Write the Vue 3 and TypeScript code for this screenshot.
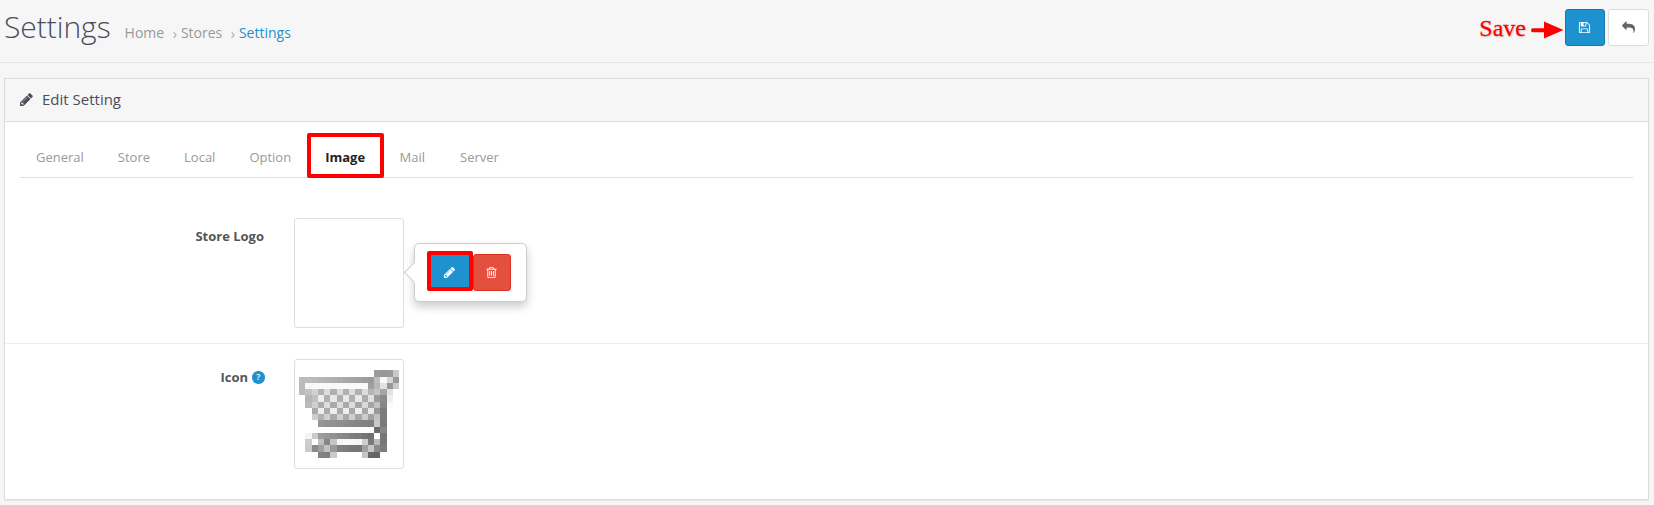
<script setup lang="ts">
interface Cell { x: number; y: number; c: string }

const crumbs: string[] = ['Home', 'Stores', 'Settings']
const tabs: string[] = ['General', 'Store', 'Local', 'Option', 'Image', 'Mail', 'Server']
const activeTab = 'Image'

const icons = {
  pencil: 'M491 1536l91-91-235-235-91 91v107h128v128h107zm523-928q0-22-22-22-10 0-17 7l-542 542q-7 7-7 17 0 22 22 22 10 0 17-7l542-542q7-7 7-17zm-54-192l416 416-832 832h-416v-416zm683 96q0 53-37 90l-166 166-416-416 166-165q36-38 90-38 53 0 91 38l235 234q37 39 37 91z',
  trash: 'M704 736v576q0 14-9 23t-23 9h-64q-14 0-23-9t-9-23v-576q0-14 9-23t23-9h64q14 0 23 9t9 23zm256 0v576q0 14-9 23t-23 9h-64q-14 0-23-9t-9-23v-576q0-14 9-23t23-9h64q14 0 23 9t9 23zm256 0v576q0 14-9 23t-23 9h-64q-14 0-23-9t-9-23v-576q0-14 9-23t23-9h64q14 0 23 9t9 23zm128 724v-948h-896v948q0 22 7 40.5t14.5 27 10.5 8.5h832q3 0 10.5-8.5t14.5-27 7-40.5zm-672-1076h448l-48-117q-7-9-17-11h-317q-10 2-17 11zm928 32v64q0 14-9 23t-23 9h-96v948q0 83-47 143.5t-113 60.5h-832q-66 0-113-58.5t-47-141.5v-952h-96q-14 0-23-9t-9-23v-64q0-14 9-23t23-9h309l70-167q15-37 54-63t79-26h320q40 0 79 26t54 63l70 167h309q14 0 23 9t9 23z',
  floppy: 'M512 1536h768v-384h-768v384zm896 0h128v-896q0-14-10-38.5t-20-34.5l-281-281q-10-10-34-20t-39-10v416q0 40-28 68t-68 28h-576q-40 0-68-28t-28-68v-416h-128v1280h128v-416q0-40 28-68t68-28h832q40 0 68 28t28 68v416zm-384-928v-320q0-13-9.5-22.5t-22.5-9.5h-192q-13 0-22.5 9.5t-9.5 22.5v320q0 13 9.5 22.5t22.5 9.5h192q13 0 22.5-9.5t9.5-22.5zm640 32v928q0 40-28 68t-68 28h-1344q-40 0-68-28t-28-68v-1344q0-40 28-68t68-28h928q40 0 88 20t76 48l280 280q28 28 48 76t20 88z',
  reply: 'M1792 1120q0 166-127 451-3 7-10.5 24t-13.5 30-13 22q-12 17-28 17-15 0-23.5-10t-8.5-25q0-9 2.5-26.5t2.5-23.5q5-68 5-123 0-101-17.5-181t-48.5-138.5-80-101-105.5-69.5-133-42.5-154-21.5-175.500-6h-224v256q0 26-19 45t-45 19-45-19l-512-512q-19-19-19-45t19-45l512-512q19-19 45-19t45 19 19 45v256h224q713 0 875 403 53 134 53 333z',
}

// 16 × 16 grey levels of the cart favicon, two hex digits per cell, ".." is empty
const cart: string[] = [
  '.. .. .. .. .. .. .. .. .. .. .. .. .. .. .. ..',
  '.. .. .. .. .. .. .. .. .. .. .. .. 9b 99 9b c8',
  'bd bb b9 b6 b3 b0 ac a8 a4 a1 9e 9b bd fa d6 9a',
  'bb f8 f9 f9 f9 fa fa fa fa fa fa a0 b8 e2 98 ca',
  'bb c4 d2 b2 dc b0 dc b0 dd b0 dd b4 c4 a5 e2 ..',
  '.. b6 c0 ee b0 e8 ae e8 b0 e8 ac e0 9a 8a ee ..',
  '.. ba d0 ac dd aa dc aa dc a6 d8 a4 c2 86 fa ..',
  '.. .. aa ef ab ee ab ee a9 ee a8 e8 98 7b .. ..',
  '.. .. ce b1 d0 aa cf aa ce a6 cc a2 c0 7b .. ..',
  '.. .. .. 96 92 90 8e 8b 88 85 82 80 c8 7a .. ..',
  '.. .. .. .. .. .. .. .. .. .. .. .. 6c 86 .. ..',
  '.. f4 ca 9c 96 90 8a 86 80 7b 75 70 ff 78 .. ..',
  '.. ce ff c0 86 c6 f6 f8 f8 f6 ce 7a ba 76 .. ..',
  '.. ca 8a a0 c2 9a 80 7c 78 76 a0 c6 8a 7c .. ..',
  '.. .. .. 82 80 ca .. .. .. .. c4 66 64 .. .. ..',
  '.. .. .. .. .. .. .. .. .. .. .. .. .. .. .. ..',
]
const cells: Cell[] = cart.flatMap((row, y) =>
  row.split(' ').map((v, x) => ({ x, y, c: v })).filter((p) => p.c !== '..')
    .map((p) => ({ x: p.x, y: p.y, c: `#${p.c}${p.c}${p.c}` })),
)
</script>

<template>
  <main class="page">
    <header class="top">
      <h1>Settings</h1>
      <nav class="crumbs">
        <template v-for="(c, i) in crumbs" :key="c">
          <span v-if="i" class="sep">›</span>
          <a :class="{ current: i === crumbs.length - 1 }">{{ c }}</a>
        </template>
      </nav>
      <div class="actions">
        <span class="note">Save</span>
        <svg class="arrow" width="33" height="18" viewBox="0 0 33 18">
          <path d="M2 9.200H17" stroke="#f00" stroke-width="4" stroke-linecap="round" />
          <path d="M13 .5L32.500 9L13 17.500Z" fill="#f00" />
        </svg>
        <button class="btn primary save" aria-label="Save"><svg width="13" height="13" viewBox="0 0 1792 1792"><path :d="icons.floppy" /></svg></button>
        <button class="btn plain" aria-label="Back"><svg width="13" height="13" viewBox="0 0 1792 1792"><path :d="icons.reply" /></svg></button>
      </div>
    </header>

    <section class="panel">
      <div class="heading">
        <svg width="15" height="15" viewBox="0 0 1792 1792"><path :d="icons.pencil" /></svg>
        <h3>Edit Setting</h3>
      </div>
      <ul class="tabs">
        <li v-for="t in tabs" :key="t" :class="{ active: t === activeTab }">{{ t }}</li>
      </ul>
      <div class="row">
        <label>Store Logo</label>
        <div class="thumb">
          <div class="popover">
            <span class="tip"></span>
            <button class="btn primary edit" aria-label="Edit"><svg width="13" height="13" viewBox="0 0 1792 1792"><path :d="icons.pencil" /></svg></button>
            <button class="btn danger" aria-label="Remove"><svg width="13" height="13" viewBox="0 0 1792 1792"><path :d="icons.trash" /></svg></button>
          </div>
        </div>
      </div>
      <div class="row second">
        <label>Icon <i class="help">?</i></label>
        <div class="thumb">
          <svg class="cart" width="100" height="100" viewBox="0 0 16 16">
            <rect v-for="p in cells" :key="p.x + '-' + p.y" :x="p.x" :y="p.y" width="1.03" height="1.03" :fill="p.c" />
          </svg>
        </div>
      </div>
    </section>
  </main>
</template>

<style>
body { margin: 0; background: #f6f6f6; }
</style>

<style scoped>
* { box-sizing: border-box; }
.page { height: 505px; overflow: hidden; background: #f6f6f6; font: 13px/20px "Open Sans", sans-serif; color: #4c4d5a; }
.top { height: 63px; border-bottom: 1px solid #e7e7e7; display: flex; padding: 0 5px 0 4px; }
h1 { margin: 7px 14px 0 0; font-size: 30px; font-weight: 300; line-height: 40px; letter-spacing: -.05px; height: 40px; }
.crumbs { display: flex; margin-top: 23px; font-size: 14px; color: #999; height: 20px; }
.crumbs .sep { margin: 1px 4px 0 8.500px; color: #aaa; }
.crumbs .current { color: #1e91cf; }
.actions { margin-left: auto; display: flex; padding-top: 9px; }
.note { font: 24px/39px "Liberation Serif", serif; color: #f00; text-shadow: 1px 1px 2px rgba(0,0,0,.2); -webkit-text-stroke: .3px #f00; margin-right: 5px; }
.arrow { margin: 12px 1px 0 0; }
.btn { display: flex; align-items: center; justify-content: center; padding: 0; border: 1px solid; border-radius: 3px; width: 41px; height: 37px; }
.btn svg { fill: currentColor; }
.save { width: 40px; margin-right: 3px; }
.save svg { margin-right: 1px; }
.primary { background: #1e91cf; border-color: #1978ab; color: #fff; }
.plain { background: #fff; border-color: #ddd; color: #666; }
.danger { background: #e3503e; border-color: #d9321e; color: #fff; }
.panel { margin: 15px 5px 0 4px; height: 422px; border: 1px solid #dcdcdc; box-shadow: 0 1px 1px rgba(0,0,0,.05); background: #fff; }
.heading { height: 43px; background: #f6f6f6; border-bottom: 1px solid #dcdcdc; display: flex; align-items: center; padding: 0 0 2px 14px; }
.heading svg { fill: #4c4d5a; margin-right: 8px; }
h3 { margin: 0; font-size: 15px; font-weight: 400; line-height: 20px; }
.tabs { list-style: none; margin: 14px 15px 0; padding: 0; height: 42px; border-bottom: 1px solid #ddd; display: flex; color: #999; }
.tabs li { padding: 11px 16px 0; margin-right: 2px; height: 41px; }
.tabs .active { width: 77px; height: 45px; margin: -3px -.6px 0 -2px; border: 4px solid #f00; border-radius: 2px; padding: 10px 14px 0; font-weight: 700; color: #222; }
.tabs .active + li { margin-right: 3px; }
.row { display: flex; padding-top: 40px; height: 165px; }
.second { border-top: 1px solid #ededed; padding-top: 15px; height: auto; }
label { width: 259px; margin-right: 30px; padding-top: 8px; display: flex; justify-content: flex-end; align-items: flex-start; font-weight: 700; font-size: 13px; color: #555; }
.thumb { position: relative; width: 110px; height: 110px; border: 1px solid #ddd; border-radius: 3px; padding: 4px; background: #fff; }
.cart { display: block; shape-rendering: crispEdges; }
.help { margin: 4px -.5px 0 4px; width: 12.500px; height: 12.500px; border-radius: 50%; background: #1e91cf; color: #fff; font: 600 9px/12px "Open Sans", sans-serif; text-align: center; }
.popover { position: absolute; left: 119px; top: 24px; width: 113px; height: 59px; border: 1px solid #ccc; border-radius: 5px; background: #fff; box-shadow: 0 5px 10px rgba(0,0,0,.2); display: flex; padding: 7px 0 0 12px; }
.tip { position: absolute; left: -8.500px; top: 21px; width: 15px; height: 15px; transform: rotate(45deg); background: #fff; border: 1px solid #ccc; border-top-color: transparent; border-right-color: transparent; }
.edit { width: 46px; height: 40px; border: 4px solid #f00; border-radius: 2px; padding: 2px 2px 0 0; }
.danger { width: 38px; margin-top: 3px; padding-right: 1px; }
</style>
